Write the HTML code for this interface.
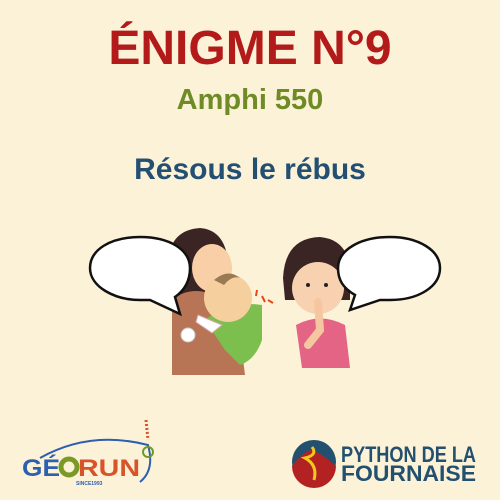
<!DOCTYPE html>
<html><head><meta charset="utf-8"><style>
html,body{margin:0;padding:0}
body{width:500px;height:500px;background:#fcf2d8;position:relative;overflow:hidden;font-family:"Liberation Sans",sans-serif;font-weight:bold}
.t{position:absolute;left:0;width:500px;text-align:center;white-space:nowrap}
</style></head><body>
<div class="t" style="top:19px;font-size:48px;color:#b31b1b;line-height:60px">ÉNIGME N°9</div>
<div class="t" style="top:83px;font-size:29px;color:#6f8b26;line-height:34px">Amphi 550</div>
<div class="t" style="top:152px;font-size:30px;color:#234f73;line-height:36px">Résous le rébus</div>

<svg style="position:absolute;left:0;top:0" width="500" height="500" viewBox="0 0 500 500">
 <!-- mother -->
 <path d="M168 262 Q170 230 200 228 Q225 230 228 262 L230 300 L168 300Z" fill="#3a2424"/>
 <ellipse cx="212" cy="268" rx="20" ry="24" fill="#f8cfa6"/>
 <path d="M172 300 Q190 285 215 295 L238 320 L245 375 L172 375Z" fill="#b87556"/>
 <!-- baby -->
 <path d="M205 320 Q230 300 262 305 L262 340 Q255 360 240 365 L225 350Z" fill="#7cbf4e"/>
 <circle cx="228" cy="298" r="24" fill="#f6cf9f"/>
 <path d="M214 280 Q228 268 240 278 Q232 275 224 285Z" fill="#9a7a52"/>
 <path d="M198 315 L222 325 L212 333 L196 322Z" fill="#fff" stroke="#d9a9a9"/>
 <circle cx="188" cy="335" r="7" fill="#fff" stroke="#ccc"/>
 <path d="M262 296 l3 6 M268 300 l5 3 M256 296 l1 -6" stroke="#e04a1a" stroke-width="2"/>
 <!-- girl -->
 <path d="M283 278 Q285 238 320 237 Q352 240 350 280 L350 300 L285 300Z" fill="#3a2424"/>
 <ellipse cx="318" cy="288" rx="26" ry="26" fill="#f8d2b0"/>
 <circle cx="308" cy="285" r="2" fill="#222"/><circle cx="326" cy="285" r="2" fill="#222"/>
 <path d="M296 325 Q320 312 345 325 L350 368 L302 368Z" fill="#e36485"/>
 <path d="M318 302 L320 330 L308 345" stroke="#f5c6a0" stroke-width="8" fill="none" stroke-linecap="round"/>
 <!-- bubbles -->
 <path d="M140 237 C110 237 90 250 90 268 C90 287 115 300 140 300 L150 300 L180 314 L175 297 C185 290 190 280 190 268 C190 250 170 237 140 237Z" fill="#fff" stroke="#111" stroke-width="2.5"/>
 <path d="M390 237 C418 237 440 250 440 268 C440 287 418 300 390 300 L380 300 L350 310 L355 295 C343 288 338 280 338 268 C338 250 360 237 390 237Z" fill="#fff" stroke="#111" stroke-width="2.5"/>
 <!-- georun logo -->
 <path d="M40 458 Q90 430 148 445 Q155 470 140 482" fill="none" stroke="#2c5fb0" stroke-width="2"/>
 <path d="M146 420 l2 20" stroke="#d9502a" stroke-width="3" stroke-dasharray="2 2"/>
 <circle cx="148" cy="452" r="5" fill="none" stroke="#6d9a2a" stroke-width="2"/>
 <text x="22" y="476" font-size="24" font-weight="bold" fill="#2c5fb0" font-family="Liberation Sans" textLength="38" lengthAdjust="spacingAndGlyphs">GÉ</text>
 <circle cx="69" cy="467" r="8" fill="none" stroke="#7a9a28" stroke-width="5"/>
 <text x="78" y="476" font-size="24" font-weight="bold" fill="#d9532a" font-family="Liberation Sans" textLength="62" lengthAdjust="spacingAndGlyphs">RUN</text>
 <text x="76" y="485" font-size="5" fill="#2c5fb0" font-family="Liberation Sans">SINCE1993</text>
 <!-- python logo -->
 <circle cx="314" cy="462" r="22" fill="#23506f"/>
 <path d="M292 466 Q300 455 310 450 Q320 452 336 466 A22 22 0 0 1 292 466Z" fill="#b22222"/>
 <path d="M312 447 Q318 455 305 458 Q318 465 314 480" stroke="#f3c81a" stroke-width="3" fill="none"/>
 <text x="341" y="462" font-size="22" font-weight="bold" fill="#23506f" font-family="Liberation Sans" textLength="135" lengthAdjust="spacingAndGlyphs">PYTHON DE LA</text>
 <text x="341" y="481" font-size="22" font-weight="bold" fill="#23506f" font-family="Liberation Sans" textLength="135" lengthAdjust="spacingAndGlyphs">FOURNAISE</text>
</svg>
</body></html>
